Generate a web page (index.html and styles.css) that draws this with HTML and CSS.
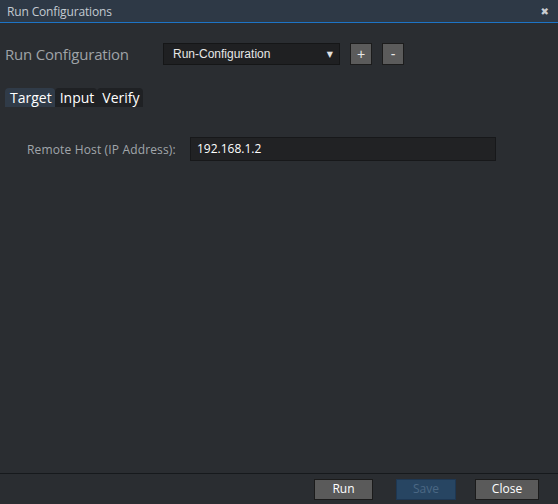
FILE: index.html
```html
<!DOCTYPE html>
<html>
<head>
<meta charset="utf-8">
<link rel="stylesheet" href="styles.css">
</head>
<body>
<div class="window">
  <div class="titlebar">
    <span class="title">Run Configurations</span>
    <span class="close">&#x2716;</span>
  </div>
  <div class="content">
    <div class="config-row">
      <span class="config-label">Run Configuration</span>
      <div class="select">
        <span class="select-text">Run-Configuration</span>
        <span class="select-arrow">&#9660;</span>
      </div>
      <button class="small-btn">+</button>
      <button class="small-btn">-</button>
    </div>
    <div class="tabs">
      <span class="tab active">Target</span>
      <span class="tab">Input</span>
      <span class="tab">Verify</span>
    </div>
    <div class="form-row">
      <span class="form-label">Remote Host (IP Address):</span>
      <div class="text-input">192.168.1.2</div>
    </div>
  </div>
  <div class="footer">
    <button class="btn">Run</button>
    <button class="btn disabled">Save</button>
    <button class="btn">Close</button>
  </div>
</div>
</body>
</html>
```
FILE: styles.css
```css
html, body {
  margin: 0;
  padding: 0;
  background: #2a2d31;
}
.window {
  width: 558px;
  height: 504px;
  display: flex;
  flex-direction: column;
  background: #2a2d31;
  font-family: "Open Sans", "Liberation Sans", sans-serif;
}
.titlebar {
  height: 22px;
  background: #2e3946;
  border-bottom: 1px solid #1d74c6;
  display: flex;
  align-items: center;
  justify-content: space-between;
  padding: 0 9px 0 7px;
  box-sizing: content-box;
}
.title {
  color: #c3cad1;
  font-size: 12px;
  letter-spacing: -0.15px;
}
.close {
  color: #c9cdd2;
  font-size: 10px;
  font-family: "DejaVu Sans", sans-serif;
}
.content {
  flex: 1;
  padding: 20px 0 0 5px;
}
.config-row {
  display: flex;
  align-items: center;
  height: 22px;
}
.config-label {
  color: #9fa3a7;
  font-size: 15px;
  letter-spacing: -0.2px;
  width: 158px;
}
.select {
  width: 175px;
  height: 20px;
  box-sizing: content-box;
  background: #1f2022;
  border: 1px solid #151617;
  display: flex;
  align-items: center;
  justify-content: space-between;
}
.select-text {
  font-family: "Liberation Sans", Arial, sans-serif;
  color: #e6e6e6;
  font-size: 12px;
  padding-left: 9px;
}
.select-arrow {
  color: #e0e0e0;
  font-size: 8px;
  padding-right: 6px;
  font-family: "DejaVu Sans", sans-serif;
}
.small-btn {
  width: 22px;
  height: 22px;
  margin-left: 10px;
  padding: 0;
  background: #5b5b5b;
  border: 1px solid #1c1c1c;
  color: #e8e8e8;
  font-family: "Liberation Sans", sans-serif;
  font-size: 14px;
  line-height: 18px;
}
.tabs {
  display: flex;
  margin-top: 23px;
  height: 19px;
}
.tab {
  color: #ffffff;
  font-size: 14px;
  line-height: 19px;
  padding: 0 3px 0 5px;
  background: #1f2124;
  border-radius: 4px 4px 0 0;
}
.tab.active {
  background: #303b48;
}
.form-row {
  display: flex;
  align-items: center;
  margin-top: 30px;
  padding-left: 22px;
}
.form-label {
  color: #a1a6ab;
  font-size: 12px;
  letter-spacing: 0.15px;
  width: 163px;
}
.text-input {
  width: 298px;
  height: 22px;
  line-height: 22px;
  background: #212224;
  border: 1px solid #17181a;
  color: #ffffff;
  font-size: 12px;
  padding-left: 6px;
}
.footer {
  height: 30px;
  border-top: 1px solid #16191c;
  display: flex;
  justify-content: flex-end;
  align-items: center;
  padding-right: 19px;
}
.btn {
  height: 21px;
  padding: 0;
  background: #5a5a5a;
  border: 1px solid #1b1b1b;
  color: #ffffff;
  font-family: "Open Sans", sans-serif;
  font-size: 12px;
  line-height: 18px;
  width: 59px;
  margin-left: 23px;
}
.btn:nth-child(3) {
  width: 64px;
  margin-left: 19px;
}
.btn.disabled {
  background: #274562;
  border-color: #1e3752;
  color: #4b6884;
  width: 60px;
}
```
